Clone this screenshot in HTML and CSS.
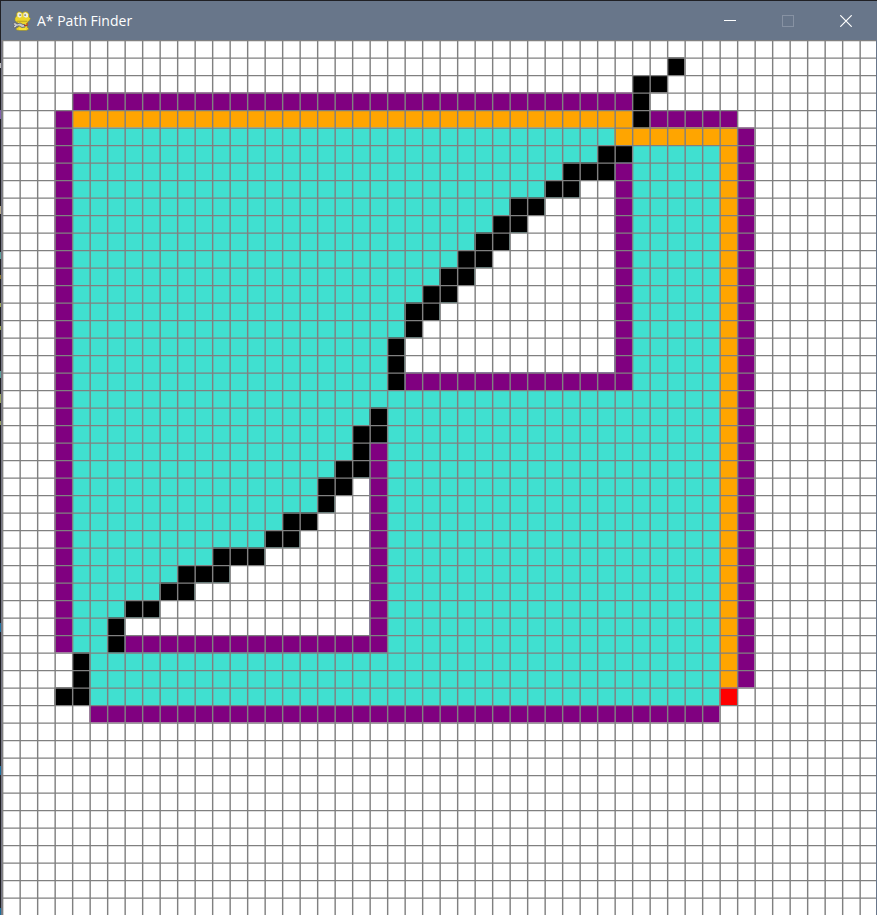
FILE: index.html
```
<!DOCTYPE html>
<html lang="en">
<head>
<meta charset="utf-8">
<title>A* Path Finder</title>
<link rel="stylesheet" href="styles.css">
</head>
<body>
<div class="window">
  <header class="titlebar">
    <svg class="app-icon" viewBox="0 0 20 20" aria-hidden="true">
      <path d="M4.500 2.500 6 .8 8.500 .8 10.500 2 12 .8 15 .8 17 3 17 6 18.500 7.500 17.500 9.500 15.500 11 15.500 13 15 16 17 18 14.500 19.500H8L4.500 19 4 17.500 6.500 16 6 12 4.500 11 3 9.500 3 7 4.500 5Z" fill="#ecd52b" stroke="#8f8430" stroke-width=".5"/>
      <path d="M5.500 2.500 7 1.300 9.500 2.500V6L7.500 6.800 5.500 5.500ZM11.500 2.500 13.500 1.300 16 3V6L14 6.800 11.500 5.500Z" fill="#ededE4"/>
      <path d="M7.500 3.300h1.200v1.700H7.500zM12.500 3.300h1.200v1.700h-1.200z" fill="#6b6d68"/>
      <path d="M5 10.300h10" stroke="#b09a22" stroke-width=".8" fill="none"/>
      <path d="M1 12.500 3 11.500 5 13 8 12 11 13.500 13 13.500V16L10 16.500 7 14.800 4.500 15.500 3 17 1 16 2.500 14.500Z" fill="#c8c9cd" stroke="#5d5f66" stroke-width=".8"/>
      <path d="M12 14.500h3M15 12v3" stroke="#b33a25" stroke-width="1.200" fill="none"/>
      <path d="M7 18h7" stroke="#fff04a" fill="none"/>
    </svg>
    <h1 class="title">A* Path Finder</h1>
    <div class="controls">
      <button class="control" type="button" aria-label="Minimize">
        <svg viewBox="0 0 12 12"><path d="M0 5.500h12"/></svg>
      </button>
      <button class="control" type="button" aria-label="Maximize" disabled>
        <svg viewBox="0 0 12 12"><path d="M.5 .5h11v11H.5z"/></svg>
      </button>
      <button class="control" type="button" aria-label="Close">
        <svg class="smooth" viewBox="0 0 12 12"><path d="M.3 .3 11.700 11.700M11.700 .3.3 11.700"/></svg>
      </button>
    </div>
  </header>
  <main class="stage">
    <svg class="board" viewBox="0 0 800 800" role="img" aria-label="Search grid with barriers and the shortest path">
      <rect width="800" height="800" fill="#fff"/>
      <g transform="scale(16)">
        <path class="closed" d="M4 5H41V38H5V35H4Z"/>
        <path class="empty" d="M33 8H35V19H23V17H24V16H25V15H26V14H27V13H28V12H29V11H30V10H31V9H33Z"/>
        <path class="empty" d="M20 25H21V34H7V33H9V32H11V31H13V30H15V29H17V28H18V27H19V26H20Z"/>
        <path class="open" d="M4 3H36V4H4ZM3 4H4V35H3ZM37 4H42V5H37ZM42 5H43V37H42ZM5 38H41V39H5Z"/>
        <path class="open" d="M35 7H36V20H23V19H35ZM21 23H22V35H7V34H21Z"/>
        <path class="path" d="M4 4H36V5H42V37H41V6H35V5H4Z"/>
        <path class="end" d="M41 37h1v1h-1z"/>
        <path class="barrier" d="M38 1h1v1h-1zM36 2h2v1h-2zM36 3h1v2h-1zM34 6h2v1h-2zM32 7h3v1h-3zM31 8h2v1h-2zM29 9h2v1h-2zM28 10h2v1h-2zM27 11h2v1h-2zM26 12h2v1h-2zM25 13h2v1h-2zM24 14h2v1h-2zM23 15h2v1h-2zM23 16h1v1h-1zM22 17h1v3h-1z"/>
        <path class="barrier" d="M21 21h1v1h-1zM20 22h2v1h-2zM20 23h1v1h-1zM19 24h2v1h-2zM18 25h2v1h-2zM18 26h1v1h-1zM16 27h2v1h-2zM15 28h2v1h-2zM12 29h3v1h-3zM10 30h3v1h-3zM9 31h2v1h-2zM7 32h2v1h-2zM6 33h1v2h-1zM4 35h1v3h-1zM3 37h1v1h-1z"/>
      </g>
      <path class="lines" id="lines"/>
    </svg>
  </main>
</div>
<script src="grid.js"></script>
</body>
</html>
```
FILE: styles.css
```
* {
  box-sizing: border-box;
}

body {
  margin: 0;
  background: #1c1c20;
}

.window {
  position: relative;
  border-top: 1px solid #202024;
  border-left: 1px solid #202024;
  overflow: hidden;
}

/* Slivers of the editor behind the window's left edge */
body::before {
  content: "";
  position: absolute;
  z-index: 1;
  left: 0;
  top: 0;
  width: 1px;
  height: 100%;
  background: linear-gradient(
    #202024 63px, #bbb 63px 68px, #202024 68px 110px,
    #8060a8 110px 119px, #202024 119px 206px,
    #b5a98c 206px 214px, #202024 214px 252px,
    #5a9d98 252px 259px, #202024 259px 275px,
    #89712a 275px 279px, #202024 279px 303px,
    #96a050 303px 307px, #202024 307px 326px,
    #96a050 326px 330px, #202024 330px 371px,
    #5a9d98 371px 378px, #202024 378px 394px,
    #96a060 394px 403px, #202024 403px 421px,
    #96a060 421px 425px, #202024 425px 623px,
    #1c6f9c 623px 632px, #202024 632px 766px,
    #1c6f9c 766px 775px, #202024 775px 908px,
    #1c6f9c 908px);
}

/* Right frame edge, drawn over the board */
.window::after {
  content: "";
  position: absolute;
  top: 0;
  right: 0;
  bottom: 0;
  width: 1px;
  background: #68768a;
}

.titlebar {
  display: flex;
  align-items: center;
  height: 39px;
  padding: 0 2px 0 11px;
  background: #68768a;
  color: #fff;
}

.app-icon {
  width: 20px;
  height: 20px;
}

.title {
  flex: 1;
  margin: 0;
  padding-left: 5px;
  font: 400 14px/20px "Open Sans", "Noto Sans", sans-serif;
}

.controls {
  display: flex;
  align-self: stretch;
}

.control {
  display: flex;
  align-items: center;
  justify-content: center;
  width: 58px;
  padding: 0;
  border: 0;
  background: none;
  color: #fff;
}

.control:disabled {
  color: #8792a3;
}

.control svg {
  width: 12px;
  height: 12px;
  fill: none;
  stroke: currentColor;
  shape-rendering: crispEdges;
}

.control .smooth {
  shape-rendering: auto;
  stroke-width: 1.2;
}

.stage {
  border-left: 1px solid #777785;
}

.board {
  display: block;
  width: 100%;
}

.closed { fill: #40e0d0; }
.open { fill: #800080; }
.path { fill: #ffa500; }
.end { fill: #f00; }
.barrier { fill: #000; }
.empty { fill: #fff; }

.lines {
  fill: none;
  stroke: #808080;
  stroke-width: 1.3;
}
```
FILE: grid.js
```
// 50 x 50 cells, each 16 units wide
let d = "";
for (let i = 0; i < 50; i++) {
  const p = i * 16 + 0.6;
  d += `M0 ${p}H800M${p} 0V800`;
}
document.getElementById("lines").setAttribute("d", d);
```
